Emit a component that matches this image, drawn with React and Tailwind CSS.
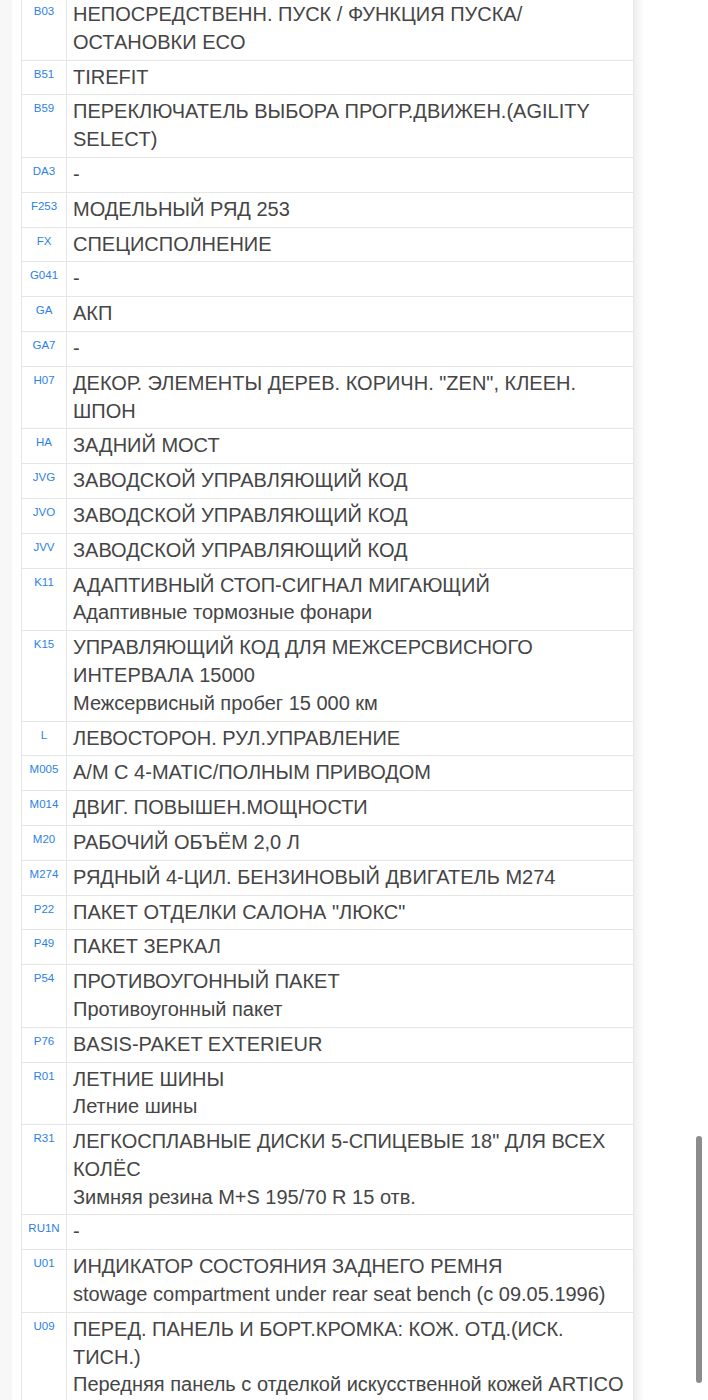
import React from "react";

const rows = [
  ["B03", ["НЕПОСРЕДСТВЕНН. ПУСК / ФУНКЦИЯ ПУСКА/", "ОСТАНОВКИ ECO"]],
  ["B51", ["TIREFIT"]],
  ["B59", ["ПЕРЕКЛЮЧАТЕЛЬ ВЫБОРА ПРОГР.ДВИЖЕН.(AGILITY", "SELECT)"]],
  ["DA3", ["-"]],
  ["F253", ["МОДЕЛЬНЫЙ РЯД 253"]],
  ["FX", ["СПЕЦИСПОЛНЕНИЕ"]],
  ["G041", ["-"]],
  ["GA", ["АКП"]],
  ["GA7", ["-"]],
  ["H07", ['ДЕКОР. ЭЛЕМЕНТЫ ДЕРЕВ. КОРИЧН. "ZEN", КЛЕЕН.', "ШПОН"]],
  ["HA", ["ЗАДНИЙ МОСТ"]],
  ["JVG", ["ЗАВОДСКОЙ УПРАВЛЯЮЩИЙ КОД"]],
  ["JVO", ["ЗАВОДСКОЙ УПРАВЛЯЮЩИЙ КОД"]],
  ["JVV", ["ЗАВОДСКОЙ УПРАВЛЯЮЩИЙ КОД"]],
  ["K11", ["АДАПТИВНЫЙ СТОП-СИГНАЛ МИГАЮЩИЙ", "Адаптивные тормозные фонари"]],
  ["K15", ["УПРАВЛЯЮЩИЙ КОД ДЛЯ МЕЖСЕРСВИСНОГО", "ИНТЕРВАЛА 15000", "Межсервисный пробег 15 000 км"]],
  ["L", ["ЛЕВОСТОРОН. РУЛ.УПРАВЛЕНИЕ"]],
  ["M005", ["А/М С 4-MATIC/ПОЛНЫМ ПРИВОДОМ"]],
  ["M014", ["ДВИГ. ПОВЫШЕН.МОЩНОСТИ"]],
  ["M20", ["РАБОЧИЙ ОБЪЁМ 2,0 Л"]],
  ["M274", ["РЯДНЫЙ 4-ЦИЛ. БЕНЗИНОВЫЙ ДВИГАТЕЛЬ M274"]],
  ["P22", ['ПАКЕТ ОТДЕЛКИ САЛОНА "ЛЮКС"']],
  ["P49", ["ПАКЕТ ЗЕРКАЛ"]],
  ["P54", ["ПРОТИВОУГОННЫЙ ПАКЕТ", "Противоугонный пакет"]],
  ["P76", ["BASIS-PAKET EXTERIEUR"]],
  ["R01", ["ЛЕТНИЕ ШИНЫ", "Летние шины"]],
  ["R31", ['ЛЕГКОСПЛАВНЫЕ ДИСКИ 5-СПИЦЕВЫЕ 18" ДЛЯ ВСЕХ', "КОЛЁС", "Зимняя резина M+S 195/70 R 15 отв."]],
  ["RU1N", ["-"]],
  ["U01", ["ИНДИКАТОР СОСТОЯНИЯ ЗАДНЕГО РЕМНЯ", "stowage compartment under rear seat bench (с 09.05.1996)"]],
  ["U09", ["ПЕРЕД. ПАНЕЛЬ И БОРТ.КРОМКА: КОЖ. ОТД.(ИСК.", "ТИСН.)", "Передняя панель с отделкой искусственной кожей ARTICO"]],
];

export default function App() {
  return (
    <div className="relative w-[708px] h-[1400px] overflow-hidden bg-white font-['Liberation_Sans',Arial,sans-serif]">
      <div className="flex items-stretch">
        <div className="w-[12px] shrink-0 bg-[#f7f7f7]" />
        <div className="w-[9px] shrink-0" />
        <div className="w-[613px] shrink-0 -mt-[2px] border-l border-r border-[#e6e6e6]">
          {rows.map(([code, lines]) => (
            <div key={code} className="flex border-b border-[#e6e6e6]">
              <div className="w-[45px] shrink-0 border-r border-[#e6e6e6] pt-[3px] text-center text-[11.5px] leading-[20px] text-[#2c7fe8]">
                {code}
              </div>
              <div className="flex-1 pl-[6px] pt-[3px] pb-[3px] text-[20px] leading-[27.8px] text-[#454545] whitespace-nowrap">
                {lines.map((l, i) => (
                  <div key={i}>{l}</div>
                ))}
              </div>
            </div>
          ))}
        </div>
        <div className="w-[10px] shrink-0 bg-gradient-to-r from-[#eeeeee] to-white" />
      </div>
      <div className="absolute left-[696px] top-[1136px] w-[6px] h-[247px] rounded-full bg-[#8c8c8c]" />
    </div>
  );
}
